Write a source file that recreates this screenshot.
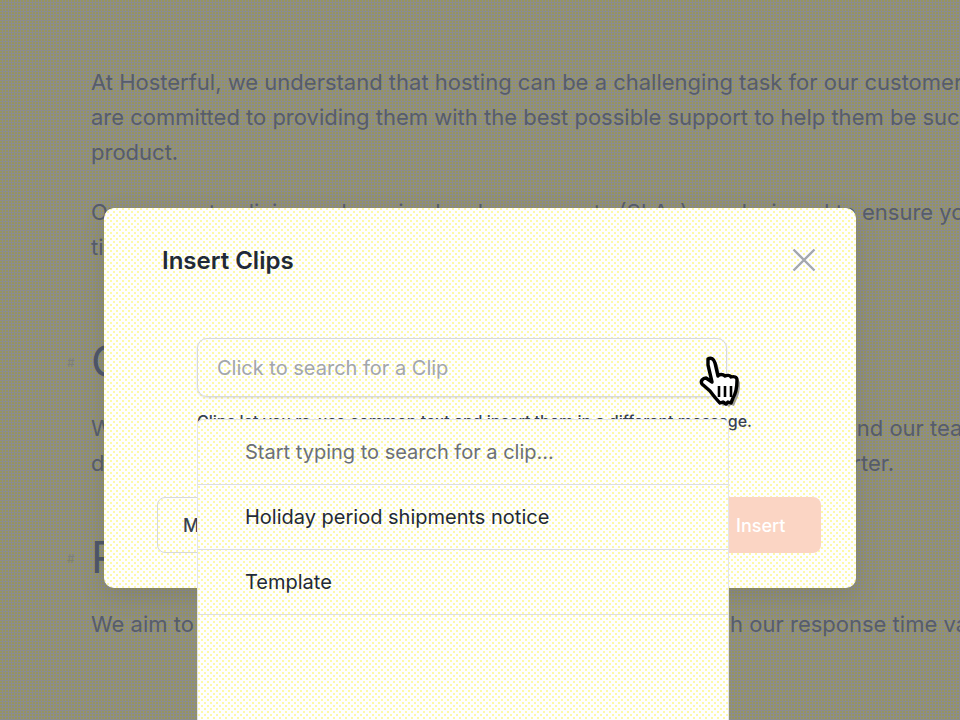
<template>
  <div class="page">
    <article class="article">
      <p class="para first">At Hosterful, we understand that hosting can be a challenging task for our customers, and we<br>are committed to providing them with the best possible support to help them be successful with our<br>product.</p>
      <p class="para">Our support policies and service level agreements (SLAs) are designed to ensure you get<br>timely and effective help.</p>
      <h2 class="heading h-one"><span class="anchor">#</span>Contact</h2>
      <p class="para">When you need help, please get in touch with our support staff by email and our team should<br>deliver a reply as soon as possible, usually within one working day or shorter.</p>
      <h2 class="heading h-two"><span class="anchor">#</span>Response</h2>
      <p class="para">We aim to respond to all support requests within hours, though our response time varies</p>
    </article>

    <div class="modal">
      <header class="modal-head">
        <h3 class="modal-title">Insert Clips</h3>
        <svg class="close" viewBox="0 0 24 24" width="24" height="24" fill="none" stroke="#a3a7ad" stroke-width="2.4" aria-label="Close">
          <path d="M1.5 1.5 22.5 22.5M22.5 1.5 1.5 22.5" />
        </svg>
      </header>
      <div class="modal-body">
        <div class="search">Click to search for a Clip</div>
        <p class="hint">Clips let you re-use common text and insert them in a different message.</p>
      </div>
      <footer class="modal-foot">
        <button class="btn ghost">Manage Clips</button>
        <button class="btn primary">Insert</button>
      </footer>
    </div>

    <ul class="dropdown">
      <li class="option muted">Start typing to search for a clip...</li>
      <li class="option">Holiday period shipments notice</li>
      <li class="option">Template</li>
    </ul>

    <svg class="cursor" viewBox="0 0 48 60" width="48" height="60" aria-hidden="true">
      <path class="cursor-shadow" d="M14 7c3-2 6 0 7 4l3 13c1-2 5-2 7 0 2-1 5-1 6 1 3-1 6 0 6 3 0 7-1 13-4 18l-2 5-3-1-2 2-3-2-3 1c-3-3-7-8-10-12l-8-7c-2-3 1-6 4-6l6 4-4-17z" />
      <path class="cursor-hand" d="M11 4c3-2 6 0 7 4l3 13c1-2 5-2 7 0 2-1 5-1 6 1 3-1 6 0 6 3 0 7-1 13-4 18l-2 5-3-1-2 2-3-2-3 1c-3-3-7-8-10-12l-8-7c-2-3 1-6 4-6l6 4-4-17z" />
      <path class="cursor-lines" d="M22 31v11M28 31v11M34 31v11" />
    </svg>
  </div>
</template>

<style>
html, body { margin: 0; background: #8b8c8d; }
</style>

<style scoped>
.page {
  position: relative;
  width: 960px;
  height: 720px;
  overflow: hidden;
  font-family: Inter, "Liberation Sans", sans-serif;
  background-color: #8b8c90;
  background-image:
    radial-gradient(circle at 1px 1px, #96945e 0.9px, transparent 1.1px);
  background-size: 3px 3px;
}
.article {
  width: 1300px;
  padding: 65px 0 0 91px;
  color: #565c6c;
}
.para {
  margin: 0 0 24px;
  font-size: 22px;
  line-height: 35.2px;
  white-space: nowrap;
}
.first { margin-bottom: 24px; }
.heading {
  position: relative;
  margin: 0 0 24px;
  font-size: 44px;
  font-weight: 400;
  line-height: 52px;
  color: #4d5569;
}
.h-one { margin-top: 70px; }
.h-two { margin-top: 50px; }
.anchor {
  position: absolute;
  left: -24px;
  top: 20px;
  font-size: 12px;
  line-height: 16px;
  color: #7d7f78;
}
.modal {
  position: absolute;
  left: 104px;
  top: 208px;
  width: 752px;
  height: 380px;
  box-sizing: border-box;
  padding: 0 35px 35px 53px;
  display: flex;
  flex-direction: column;
  border-radius: 10px;
  background-color: #fefeff;
  background-image:
    radial-gradient(circle at 1px 1px, #fdf9a8 0.8px, transparent 1px),
    radial-gradient(circle at 4px 4px, #fdf9a8 0.8px, transparent 1px);
  background-size: 6px 6px;
  box-shadow: 0 8px 24px rgba(70, 70, 70, 0.18);
}
.modal-head {
  display: flex;
  align-items: center;
  justify-content: space-between;
  height: 104px;
  padding-right: 5px;
}
.modal-title {
  margin: 0;
  padding-left: 5px;
  font-size: 24px;
  font-weight: 600;
  color: #1f2a37;
}
.close { display: block; }
.modal-body {
  flex: 1;
  padding: 26px 94px 0 40px;
}
.search {
  box-sizing: border-box;
  height: 59px;
  padding: 0 19px;
  display: flex;
  align-items: center;
  border: 1px solid #d6d8dc;
  border-radius: 10px;
  box-shadow: 0 1px 2px rgba(70, 70, 70, 0.15);
  font-size: 20px;
  color: #a2a6ae;
}
.hint {
  margin: 14px 0 0;
  font-size: 16px;
  font-weight: 500;
  white-space: nowrap;
  color: #374151;
}
.modal-foot {
  display: flex;
  justify-content: space-between;
  margin-left: 0;
}
.btn {
  height: 56px;
  padding: 0 25px;
  border-radius: 8px;
  font: 500 18px Inter, "Liberation Sans", sans-serif;
}
.ghost {
  border: 1px solid #d6d8dc;
  background: transparent;
  color: #374151;
}
.primary {
  width: 170px;
  padding-left: 85px;
  text-align: left;
  border: 0;
  background: #fbd5c4;
  color: #fff;
}
.dropdown {
  position: absolute;
  left: 197px;
  top: 419px;
  width: 532px;
  height: 301px;
  box-sizing: border-box;
  margin: 0;
  padding: 0;
  list-style: none;
  border: 1px solid #e3e4e8;
  border-width: 1px 1px 0;
  border-radius: 6px 6px 0 0;
  background-color: #fefeff;
  background-image:
    radial-gradient(circle at 1px 1px, #fdf9a8 0.8px, transparent 1px),
    radial-gradient(circle at 4px 4px, #fdf9a8 0.8px, transparent 1px);
  background-size: 6px 6px;
}
.option {
  box-sizing: border-box;
  height: 65px;
  padding: 0 47px;
  display: flex;
  align-items: center;
  font-size: 20px;
  color: #1f2a37;
  border-bottom: 1px solid #dcdde2;
}
.muted { color: #6b7078; }
.cursor {
  position: absolute;
  left: 697px;
  top: 355px;
  overflow: visible;
}
.cursor-shadow { fill: #444; opacity: 0.5; }
.cursor-hand { fill: #fff; stroke: #000; stroke-width: 3.4; stroke-linejoin: round; }
.cursor-lines { fill: none; stroke: #000; stroke-width: 2.6; }
</style>
